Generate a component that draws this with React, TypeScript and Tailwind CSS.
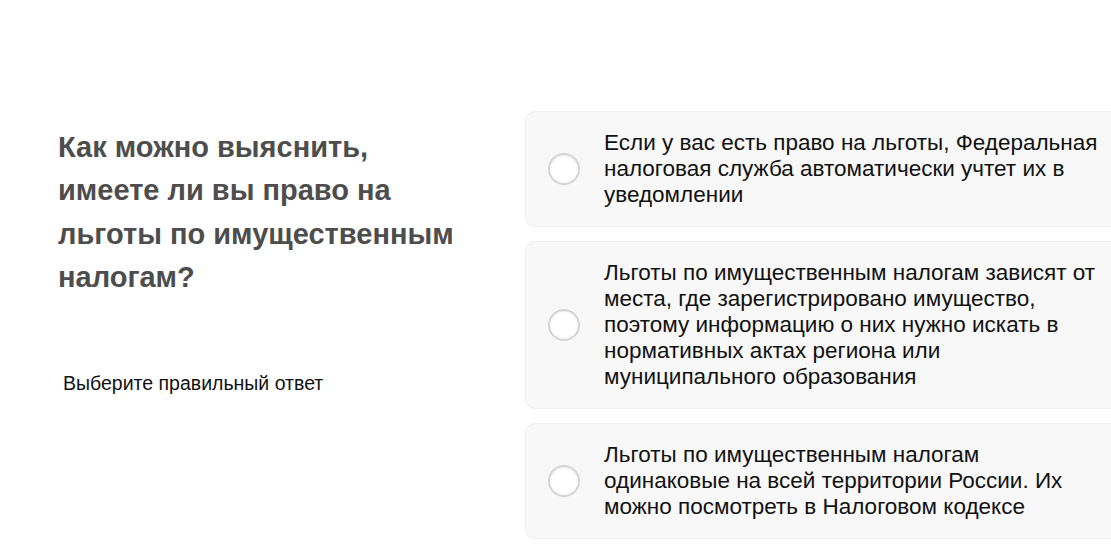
import React from "react";

const answers = [
  "Если у вас есть право на льготы, Федеральная налоговая служба автоматически учтет их в уведомлении",
  "Льготы по имущественным налогам зависят от места, где зарегистрировано имущество, поэтому информацию о них нужно искать в нормативных актах региона или муниципального образования",
  "Льготы по имущественным налогам одинаковые на всей территории России. Их можно посмотреть в Налоговом кодексе",
];

export default function App() {
  return (
    <div
      className="w-[1111px] h-[558px] overflow-hidden bg-white"
      style={{ fontFamily: '"Liberation Sans", Arial, sans-serif' }}
    >
      <div className="flex pt-[111px]">
        {/* Question */}
        <div className="w-[525px] shrink-0 pl-[58px]">
          <h2 className="mt-[15px] w-[410px] text-[29px] leading-[43.3px] font-bold text-[#4d4d4d]">
            Как можно выяснить, имеете ли вы право на льготы по имущественным налогам?
          </h2>
          <p className="mt-[70px] pl-[5px] text-[19.5px] leading-[28px] text-[#111]">
            Выберите правильный ответ
          </p>
        </div>

        {/* Answers */}
        <div className="flex flex-col gap-[14px] w-[620px] shrink-0">
          {answers.map((a) => (
            <label
              key={a}
              className="flex items-center rounded-[10px] border border-[#efefef] bg-[#f8f8f8] py-[18px] pl-[22px] pr-4 cursor-pointer"
            >
              <span className="w-[32px] h-[32px] shrink-0 rounded-full border-2 border-[#d4d4d4] bg-white shadow-[inset_0_1px_2px_rgba(0,0,0,0.08)]" />
              <span className="ml-[24px] w-[505px] text-[22.5px] leading-[26px] text-[#111]">
                {a}
              </span>
            </label>
          ))}
        </div>
      </div>
    </div>
  );
}
